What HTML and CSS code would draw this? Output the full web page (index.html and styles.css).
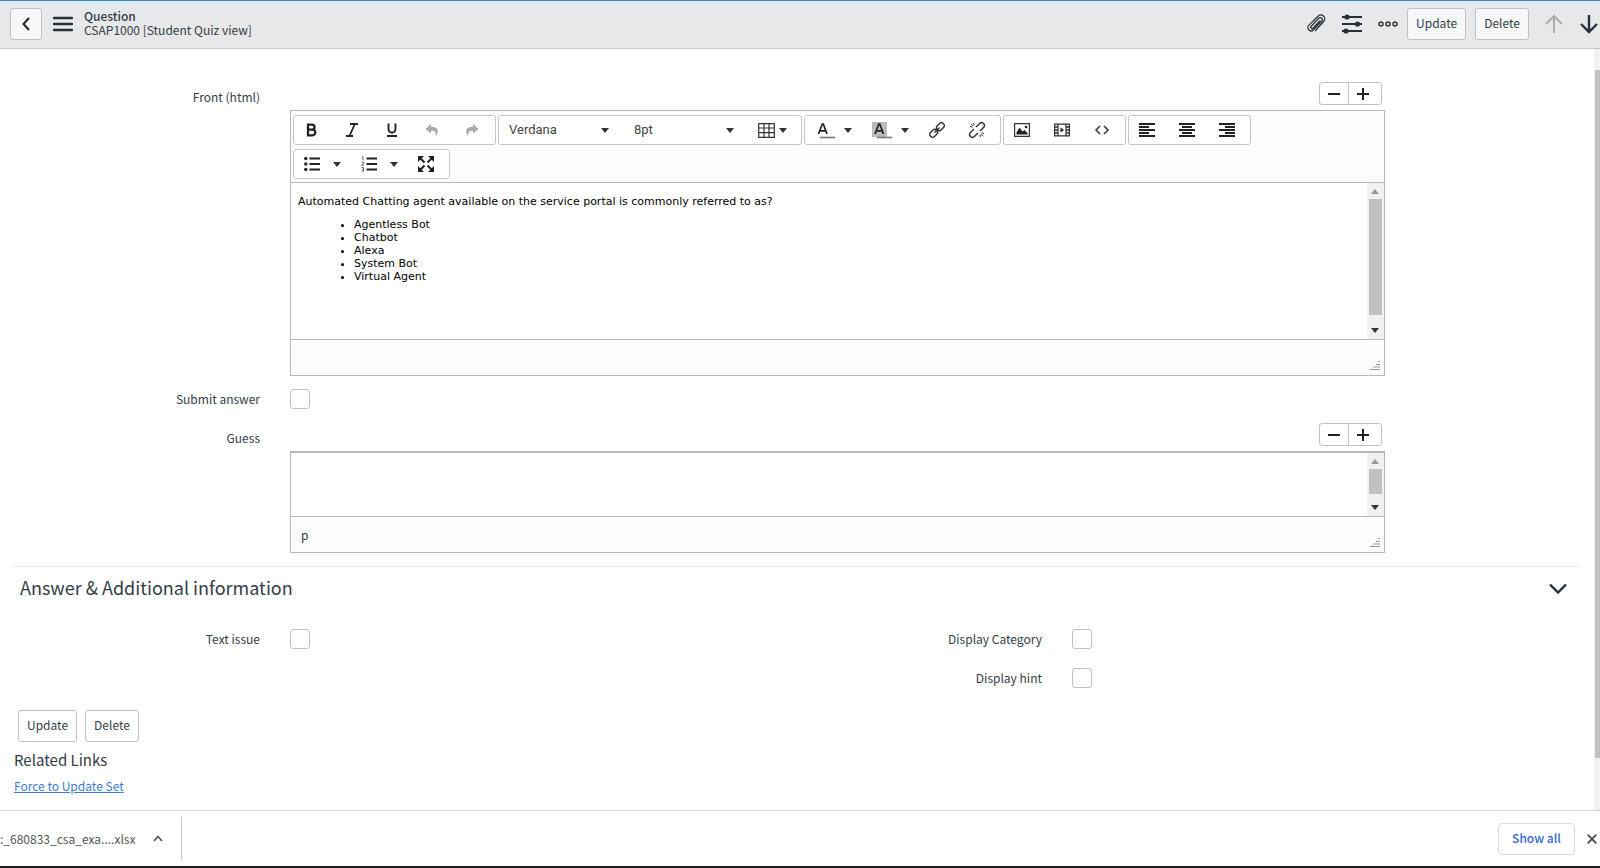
FILE: index.html
```html
<!DOCTYPE html>
<html lang="en">
<head>
    <meta charset="UTF-8">
    <meta name="viewport" content="width=device-width, initial-scale=1.0">
    <title>CSAP1000 | Question</title>
    <link rel="stylesheet" href="styles.css">
</head>
<body>
    <!-- shared icons -->
    <svg width="0" height="0" class="icon-defs">
        <symbol id="caret" viewBox="0 0 8 5"><path d="M0 0h8L4 5z" fill="#333"/></symbol>
        <symbol id="arrow-up" viewBox="0 0 8 5"><path d="M0 5h8L4 0z" fill="#999"/></symbol>
        <symbol id="minus" viewBox="0 0 12 12"><path d="M0 6h12" stroke="#222" stroke-width="2"/></symbol>
        <symbol id="plus" viewBox="0 0 12 12"><path d="M0 6h12M6 0v12" stroke="#222" stroke-width="2"/></symbol>
        <symbol id="grip" viewBox="0 0 10 10"><path d="M8 1.5h2M6 4.5h4M3 7h7M0 9.5h10" stroke="#999" stroke-width="1"/></symbol>
    </svg>

    <header class="form-header">
        <button class="btn btn-back" aria-label="Back">
            <svg width="8" height="14" viewBox="0 0 8 14"><path d="M7 1L1.5 7L7 13" fill="none" stroke="#222" stroke-width="2"/></svg>
        </button>
        <button class="icon-btn btn-menu" aria-label="Form menu">
            <svg width="20" height="16" viewBox="0 0 20 16"><path d="M1.2 2h17.6M1.2 8h17.6M1.2 14h17.6" stroke="#26313c" stroke-width="2.6" stroke-linecap="round"/></svg>
        </button>
        <div class="header-title">
            <h1>Question</h1>
            <div>CSAP1000 [Student Quiz view]</div>
        </div>
        <div class="header-actions">
            <button class="icon-btn" aria-label="Attachments">
                <svg width="20" height="20" viewBox="0 0 20 20" fill="none" stroke="#2b343c" stroke-width="1.3" stroke-linecap="round"><path d="M5 12.500L12.800 4.300a2 2 0 0 1 3 2.700L7.500 15.800a3.200 3.200 0 0 1-4.800-4.400L12 2.300a3.800 3.800 0 0 1 5.800 5L9.500 16.500M5 12.500a1.300 1.300 0 0 0 2 1.700L13.800 7"/></svg>
            </button>
            <button class="icon-btn" aria-label="Personalize form">
                <svg width="20" height="20" viewBox="0 0 20 20" stroke="#26313c" stroke-width="1.8" fill="#26313c"><path d="M0 3h20M0 10h20M0 17h20"/><g stroke="none"><circle cx="5" cy="3" r="2.600"/><circle cx="15.500" cy="10" r="2.600"/><circle cx="4" cy="17" r="2.600"/></g></svg>
            </button>
            <button class="icon-btn" aria-label="More options">
                <svg width="20" height="8" viewBox="0 0 20 8" fill="none" stroke="#333" stroke-width="1.5"><circle cx="3" cy="4" r="2"/><circle cx="10" cy="4" r="2"/><circle cx="17" cy="4" r="2"/></svg>
            </button>
            <button class="btn">Update</button>
            <button class="btn">Delete</button>
            <button class="icon-btn btn-prev" aria-label="Previous record" disabled>
                <svg width="18" height="20" viewBox="0 0 18 20" fill="none" stroke="#a9adb0" stroke-width="2"><path d="M9 19V2M1 10L9 2l8 8"/></svg>
            </button>
            <button class="icon-btn" aria-label="Next record">
                <svg width="18" height="20" viewBox="0 0 18 20" fill="none" stroke="#26313c" stroke-width="2.400"><path d="M9 1v17M1 10l8 8 8-8"/></svg>
            </button>
        </div>
    </header>

    <div class="page">
        <main class="form">
            <div class="form-row">
                <span class="label" id="front-label">Front (html)</span>
                <div class="field">
                    <div class="resize-buttons">
                        <button aria-label="Shrink"><svg width="12" height="12"><use href="#minus"/></svg></button>
                        <button aria-label="Expand"><svg width="12" height="12"><use href="#plus"/></svg></button>
                    </div>
                    <div class="editor">
                        <div class="toolbar">
                            <div class="tool-group">
                                <button class="tool" aria-label="Bold"><svg width="16" height="16" viewBox="0 0 16 16"><path d="M4 1.500v13M4 2.700h4a2.500 2.500 0 0 1 0 5h-4h4.500a2.800 2.800 0 0 1 0 5.600h-4.500" fill="none" stroke="#222" stroke-width="2.300"/></svg></button>
                                <button class="tool" aria-label="Italic"><svg width="16" height="16" viewBox="0 0 16 16"><path d="M6 2h8M2 14h7M10.800 2L5.500 14" fill="none" stroke="#222" stroke-width="1.800"/></svg></button>
                                <button class="tool" aria-label="Underline"><svg width="16" height="16" viewBox="0 0 16 16"><path d="M4.500 1.500V7a3.500 3.500 0 0 0 7 0V1.500M3 14h10" fill="none" stroke="#222" stroke-width="1.900"/></svg></button>
                                <button class="tool" aria-label="Undo"><svg width="14" height="14" viewBox="0 0 14 14"><path d="M6 1L0.500 6L6 10.500V7.800C9.500 7.500 11 9 11 13C14.500 8 13 3.800 6 3.800z" fill="#aaa"/></svg></button>
                                <button class="tool" aria-label="Redo"><svg width="14" height="14" viewBox="0 0 14 14"><path d="M8 1L13.500 6L8 10.500V7.800C4.500 7.500 3 9 3 13C-0.500 8 1 3.800 8 3.800z" fill="#aaa"/></svg></button>
                            </div>
                            <div class="tool-group">
                                <div class="select-wrap">
                                    <select aria-label="Font family"><option>Verdana</option></select>
                                    <svg width="8" height="5"><use href="#caret"/></svg>
                                </div>
                                <div class="select-wrap">
                                    <select aria-label="Font size"><option>8pt</option></select>
                                    <svg width="8" height="5"><use href="#caret"/></svg>
                                </div>
                                <button class="tool tool-table" aria-label="Table">
                                    <svg width="17" height="15" viewBox="0 0 17 15"><path d="M.7.700h15.600v13.600H.7zM.7 5h15.600M.7 9.700h15.600M6 .7v13.600M11 .7v13.600" fill="none" stroke="#333" stroke-width="1.200"/></svg>
                                    <svg width="8" height="5"><use href="#caret"/></svg>
                                </button>
                            </div>
                            <div class="tool-group">
                                <button class="tool tool-split" aria-label="Text color">
                                    <svg width="20" height="18" viewBox="0 0 20 18"><path d="M3.500 13L7.300 3h1L12 13M5 9.800h5.500" fill="none" stroke="#222" stroke-width="1.700"/><path d="M5 16.500h15" stroke="#777" stroke-width="1.600"/></svg>
                                    <svg width="8" height="5"><use href="#caret"/></svg>
                                </button>
                                <button class="tool tool-split" aria-label="Background color">
                                    <svg width="20" height="18" viewBox="0 0 20 18"><path d="M0 1h15v15H0z" fill="#bbb"/><path d="M3 13L6.800 3h1L11.500 13M4.500 9.800h5.500" fill="none" stroke="#222" stroke-width="1.700"/><path d="M5 16.500h15" stroke="#777" stroke-width="1.600"/></svg>
                                    <svg width="8" height="5"><use href="#caret"/></svg>
                                </button>
                                <button class="tool" aria-label="Insert link"><svg width="16" height="16" viewBox="0 0 16 16" fill="none" stroke="#333" stroke-width="1.400"><g transform="rotate(-45 8 8)"><rect x="-1" y="5.200" width="8.500" height="5.600" rx="2.600"/><rect x="8.500" y="5.200" width="8.500" height="5.600" rx="2.600"/><path d="M4.500 8h7"/></g></svg></button>
                                <button class="tool" aria-label="Remove link"><svg width="16" height="16" viewBox="0 0 16 16" fill="none" stroke="#333" stroke-width="1.400"><g transform="rotate(-45 8 8)"><path d="M6.500 5.200H1.500a2.500 2.500 0 0 0 0 5.600h5M9.500 5.200h5a2.500 2.500 0 0 1 0 5.600h-5"/></g><path d="M4.500 1l.7 2.500M1 4.500l2.500.7M1.800 1.800l2 2M11.500 15l-.7-2.500M15 11.500l-2.500-.7M14.200 14.200l-2-2" stroke-width="1"/></svg></button>
                            </div>
                            <div class="tool-group">
                                <button class="tool" aria-label="Insert image"><svg width="16" height="14" viewBox="0 0 16 14"><path d="M.6.600h14.800v12.800H.6z" fill="#fff" stroke="#333" stroke-width="1.200"/><path d="M2.500 11.500V9.500L5.500 4.500L8.500 8.500L10.500 7L13.500 10v1.500z" fill="#222"/><circle cx="12" cy="4" r="1.300" fill="#222"/></svg></button>
                                <button class="tool" aria-label="Insert video"><svg width="16" height="14" viewBox="0 0 16 14"><path d="M.6 1.200h14.800v11.600H.6zM4 1v12M12 1v12" fill="none" stroke="#333" stroke-width="1.200"/><path d="M1 4h3M1 7h3M1 10h3M12 4h3M12 7h3M12 10h3" stroke="#333" stroke-width="1.400"/><path d="M6.500 4.500v5L10 7z" fill="#222"/></svg></button>
                                <button class="tool" aria-label="Source code"><svg width="14" height="10" viewBox="0 0 14 10"><path d="M5 1L1 5l4 4M9 1l4 4-4 4" fill="none" stroke="#333" stroke-width="1.500"/></svg></button>
                            </div>
                            <div class="tool-group">
                                <button class="tool" aria-label="Align left"><svg width="16" height="14" viewBox="0 0 16 14"><path d="M0 1h16M0 4h10M0 7h16M0 10h10M0 13h16" stroke="#222" stroke-width="1.800"/></svg></button>
                                <button class="tool" aria-label="Align center"><svg width="16" height="14" viewBox="0 0 16 14"><path d="M0 1h16M3 4h10M0 7h16M3 10h10M0 13h16" stroke="#222" stroke-width="1.800"/></svg></button>
                                <button class="tool" aria-label="Align right"><svg width="16" height="14" viewBox="0 0 16 14"><path d="M0 1h16M6 4h10M0 7h16M6 10h10M0 13h16" stroke="#222" stroke-width="1.800"/></svg></button>
                            </div>
                            <div class="tool-group">
                                <button class="tool tool-split" aria-label="Bullet list">
                                    <svg width="16" height="16" viewBox="0 0 16 16"><path d="M5.500 2.500H16M5.500 8H16M5.500 13.500H16" stroke="#222" stroke-width="2"/><g fill="#222"><circle cx="1.800" cy="2.500" r="1.700"/><circle cx="1.800" cy="8" r="1.700"/><circle cx="1.800" cy="13.500" r="1.700"/></g></svg>
                                    <svg width="8" height="5"><use href="#caret"/></svg>
                                </button>
                                <button class="tool tool-split" aria-label="Numbered list">
                                    <svg width="16" height="16" viewBox="0 0 16 16"><path d="M5.500 2.500H16M5.500 8H16M5.500 13.500H16" stroke="#222" stroke-width="2"/><path d="M1 .8h1v3.700M.5 6.300h2v1.400l-2 1.600h2.200M.5 11.500h2v3.700h-2M1 13.300h1.500" fill="none" stroke="#444" stroke-width=".8"/></svg>
                                    <svg width="8" height="5"><use href="#caret"/></svg>
                                </button>
                                <button class="tool" aria-label="Fullscreen"><svg width="16" height="16" viewBox="0 0 16 16"><path d="M0 0h6L0 6zM16 0v6L10 0zM0 16v-6l6 6zM16 16h-6l6-6z" fill="#222"/><path d="M2 2l4.500 4.500M14 2L9.500 6.500M2 14l4.500-4.500M14 14L9.500 9.500" stroke="#222" stroke-width="2"/></svg></button>
                            </div>
                        </div>
                        <div class="editor-body">
                            <div class="editor-content" contenteditable="true" spellcheck="false" role="textbox" aria-labelledby="front-label">
                                <p>Automated Chatting agent available on the service portal is commonly referred to as?</p>
                                <ul>
                                    <li>Agentless Bot</li>
                                    <li>Chatbot</li>
                                    <li>Alexa</li>
                                    <li>System Bot</li>
                                    <li>Virtual Agent</li>
                                </ul>
                            </div>
                            <div class="scrollbar">
                                <svg width="8" height="5"><use href="#arrow-up"/></svg>
                                <div class="thumb"></div>
                                <svg width="8" height="5"><use href="#caret"/></svg>
                            </div>
                        </div>
                        <div class="statusbar"><span></span><svg width="10" height="10"><use href="#grip"/></svg></div>
                    </div>
                </div>
            </div>

            <div class="form-row check-row">
                <label class="label" for="submit_answer">Submit answer</label>
                <input type="checkbox" id="submit_answer">
            </div>

            <div class="form-row guess-row">
                <span class="label" id="guess-label">Guess</span>
                <div class="field">
                    <div class="resize-buttons">
                        <button aria-label="Shrink"><svg width="12" height="12"><use href="#minus"/></svg></button>
                        <button aria-label="Expand"><svg width="12" height="12"><use href="#plus"/></svg></button>
                    </div>
                    <div class="editor editor-small">
                        <div class="editor-body">
                            <div class="editor-content" contenteditable="true" role="textbox" aria-labelledby="guess-label"></div>
                            <div class="scrollbar">
                                <svg width="8" height="5"><use href="#arrow-up"/></svg>
                                <div class="thumb"></div>
                                <svg width="8" height="5"><use href="#caret"/></svg>
                            </div>
                        </div>
                        <div class="statusbar"><span>p</span><svg width="10" height="10"><use href="#grip"/></svg></div>
                    </div>
                </div>
            </div>

            <section class="section">
                <div class="section-header">
                    <h2>Answer &amp; Additional information</h2>
                    <button class="icon-btn" aria-label="Collapse section">
                        <svg width="18" height="12" viewBox="0 0 18 12"><path d="M1 1.500l8 8 8-8" fill="none" stroke="#26313c" stroke-width="2.400"/></svg>
                    </button>
                </div>
                <div class="section-columns">
                    <div>
                        <div class="form-row check-row">
                            <label class="label" for="text_issue">Text issue</label>
                            <input type="checkbox" id="text_issue">
                        </div>
                    </div>
                    <div>
                        <div class="form-row check-row">
                            <label class="label" for="display_category">Display Category</label>
                            <input type="checkbox" id="display_category">
                        </div>
                        <div class="form-row check-row">
                            <label class="label" for="display_hint">Display hint</label>
                            <input type="checkbox" id="display_hint">
                        </div>
                    </div>
                </div>
            </section>

            <div class="form-buttons">
                <button class="btn">Update</button>
                <button class="btn">Delete</button>
            </div>
            <h3>Related Links</h3>
            <a href="#" class="related-link">Force to Update Set</a>
        </main>
        <div class="page-scrollbar"><div class="page-thumb"></div></div>
    </div>

    <footer class="downloads">
        <div class="download-item">
            <span>:_680833_csa_exa....xlsx</span>
            <button class="icon-btn" aria-label="Download options">
                <svg width="10" height="7" viewBox="0 0 10 7"><path d="M1 6l4-4.500L9 6" fill="none" stroke="#555" stroke-width="1.700"/></svg>
            </button>
        </div>
        <button class="show-all">Show all</button>
        <button class="icon-btn" aria-label="Close downloads">
            <svg width="10" height="10" viewBox="0 0 10 10"><path d="M.7.700l8.600 8.600M9.300.7L.7 9.300" stroke="#444" stroke-width="1.700"/></svg>
        </button>
    </footer>
</body>
</html>
```
FILE: styles.css
```css
:root {
    --text-color: #343d47;
    --border: #bdc0c4;
    --editor-border: #b8b8b8;
    --toolbar-bg: #fcfcfc;
    --link: #3b7ddd;
    --font: "Noto Sans CJK SC", "Noto Sans", sans-serif;
}

* {
    box-sizing: border-box;
}

body {
    margin: 0;
    height: 100vh;
    display: flex;
    flex-direction: column;
    overflow: hidden;
    background-color: #fff;
    color: var(--text-color);
    font-family: var(--font);
    font-size: 12px;
    line-height: 14px;
}

button {
    font-family: inherit;
    font-size: inherit;
    line-height: inherit;
    color: inherit;
    cursor: pointer;
}

svg {
    display: block;
    flex: none;
    overflow: visible;
}

.icon-defs {
    position: absolute;
}

h1, h2, h3 {
    margin: 0;
    font-weight: 400;
}

.icon-btn {
    padding: 0;
    border: none;
    background: none;
}

.btn {
    height: 32px;
    padding: 0 8px 2px;
    border: 1px solid var(--border);
    border-radius: 3px;
    background-color: #fff;
}

/* header */
.form-header {
    display: flex;
    align-items: center;
    height: 49px;
    padding: 0 2px 1px 10px;
    border-top: 1px solid #4580ab;
    border-bottom: 1px solid #c5c7c9;
    background: linear-gradient(#d9ebf5 4px, #e6e8ea 4px);
}

.form-header .btn {
    background-color: #f5f7f9;
}

.form-header .btn-back {
    display: flex;
    align-items: center;
    justify-content: center;
    width: 32px;
    padding: 0;
}

.btn-menu {
    margin: 0 11px;
}

.header-title {
    padding-bottom: 3px;
}

.header-title h1 {
    font-size: 12px;
    line-height: 14px;
    font-weight: 500;
}

.header-actions {
    display: flex;
    align-items: center;
    gap: 16px;
    margin-left: auto;
}

.header-actions .btn {
    margin-left: -7px;
}

.btn-prev {
    margin-right: 1px;
}

/* form */
.page {
    display: flex;
    flex: 1;
    min-height: 0;
}

.form {
    flex: 1;
    padding: 33px 16px 0 14px;
}

.form-row {
    display: grid;
    grid-template-columns: 246px 70%;
    column-gap: 30px;
}

.label {
    padding-top: 8px;
    text-align: right;
}

.resize-buttons {
    display: flex;
    justify-content: flex-end;
    padding-right: 3px;
    margin-bottom: 5px;
}

.resize-buttons button {
    width: 30px;
    height: 23px;
    padding: 0 8px;
    border: 1px solid var(--border);
    border-radius: 3px 0 0 3px;
    background-color: #fff;
}

.resize-buttons button + button {
    width: 34px;
    margin-left: -1px;
    border-radius: 0 3px 3px 0;
}

.editor {
    border: 1px solid var(--editor-border);
}

.toolbar {
    display: flex;
    flex-wrap: wrap;
    gap: 4px 2px;
    padding: 4px 2px 3px;
    border-bottom: 1px solid var(--editor-border);
    background-color: var(--toolbar-bg);
}

.tool-group {
    display: flex;
    gap: 4px;
    height: 30px;
    padding-right: 5px;
    border: 1px solid #c4c6c8;
    border-radius: 3px;
    background-color: #fff;
}

.tool {
    display: flex;
    align-items: center;
    justify-content: center;
    width: 36px;
    padding: 0;
    border: none;
    background: none;
}

.tool-split {
    justify-content: space-between;
    width: 53px;
    padding: 0 6px 0 10px;
}

.tool-table {
    justify-content: flex-start;
    gap: 4px;
    width: 47px;
    padding-left: 9px;
}

.select-wrap {
    display: grid;
    align-items: center;
    width: 121px;
}

.select-wrap select,
.select-wrap svg {
    grid-area: 1 / 1;
}

.select-wrap svg {
    justify-self: end;
    margin-right: 11px;
    pointer-events: none;
}

.select-wrap select {
    appearance: none;
    width: 100%;
    height: 28px;
    padding: 0 10px 2px;
    border: none;
    background: none;
    color: #444;
    font-family: Roboto, sans-serif;
    font-size: 13px;
}

.editor-body {
    display: flex;
    height: 157px;
    border-bottom: 1px solid var(--editor-border);
}

.editor-content {
    flex: 1;
    padding: 12px 7px;
    color: #000;
    font-family: "DejaVu Sans", Verdana, sans-serif;
    font-size: 11px;
    line-height: 13px;
    outline: none;
}

.editor-content p {
    margin: 0 0 10px;
}

.editor-content ul {
    margin: 0;
    padding-left: 56px;
}

.scrollbar {
    display: flex;
    flex-direction: column;
    align-items: center;
    width: 17px;
    padding: 6px 0;
    background-color: #f1f1f1;
}

.thumb {
    width: 13px;
    height: 116px;
    margin: 5px 0 auto;
    background-color: #c1c1c1;
}

.statusbar {
    display: flex;
    justify-content: space-between;
    align-items: center;
    height: 35px;
    padding: 0 4px 0 10px;
    background-color: var(--toolbar-bg);
}

.statusbar svg {
    align-self: flex-end;
    margin-bottom: 5px;
}

.editor-small {
    border-top-width: 2px;
}

.editor-small .editor-body {
    height: 64px;
}

.editor-small .thumb {
    height: 25px;
}

/* checkboxes */
input[type="checkbox"] {
    appearance: none;
    width: 20px;
    height: 20px;
    margin: 0;
    border: 1px solid var(--border);
    border-radius: 3px;
    background-color: #fff;
}

.check-row {
    align-items: center;
    margin: 13px 0 14px;
}

.check-row .label {
    padding-top: 0;
}

.section {
    margin-top: 13px;
    border-top: 1px solid #e6e8ea;
}

.section-header {
    display: flex;
    align-items: center;
    justify-content: space-between;
    height: 43px;
    padding: 0 11px 0 6px;
}

.section-header h2 {
    padding-bottom: 3px;
    font-size: 18px;
    line-height: 24px;
}

.section-columns {
    display: grid;
    grid-template-columns: 1fr 1fr;
    padding-top: 6px;
}

.section-columns .check-row {
    margin: 13px 0 19px;
}

.section-columns .check-row + .check-row {
    margin-bottom: 0;
}

.form-buttons {
    display: flex;
    gap: 8px;
    padding: 22px 4px 9px;
}

h3 {
    margin-bottom: 10px;
    font-size: 15px;
    line-height: 18px;
}

.related-link {
    color: var(--link);
}

.page-scrollbar {
    width: 6px;
    padding: 21px 0 0 1px;
    background-color: #f1f1f1;
}

.page-thumb {
    height: 93%;
    background-color: #c1c1c1;
}

/* downloads bar */
.downloads {
    display: flex;
    align-items: center;
    height: 58px;
    padding-right: 3px;
    border-top: 1px solid #d5d7d9;
    border-bottom: 2px solid #1c1c1c;
    background-color: #fff;
}

.download-item {
    display: flex;
    align-items: center;
    justify-content: space-between;
    width: 182px;
    height: 44px;
    padding-right: 18px;
    border-right: 1px solid #c8cacc;
    color: #555;
}

.show-all {
    width: 77px;
    height: 32px;
    margin: 0 12px 0 auto;
    padding: 0 0 2px;
    border: 1px solid #dadce0;
    border-radius: 4px;
    background-color: #fff;
    color: #3367d6;
    font-weight: 500;
}
```
